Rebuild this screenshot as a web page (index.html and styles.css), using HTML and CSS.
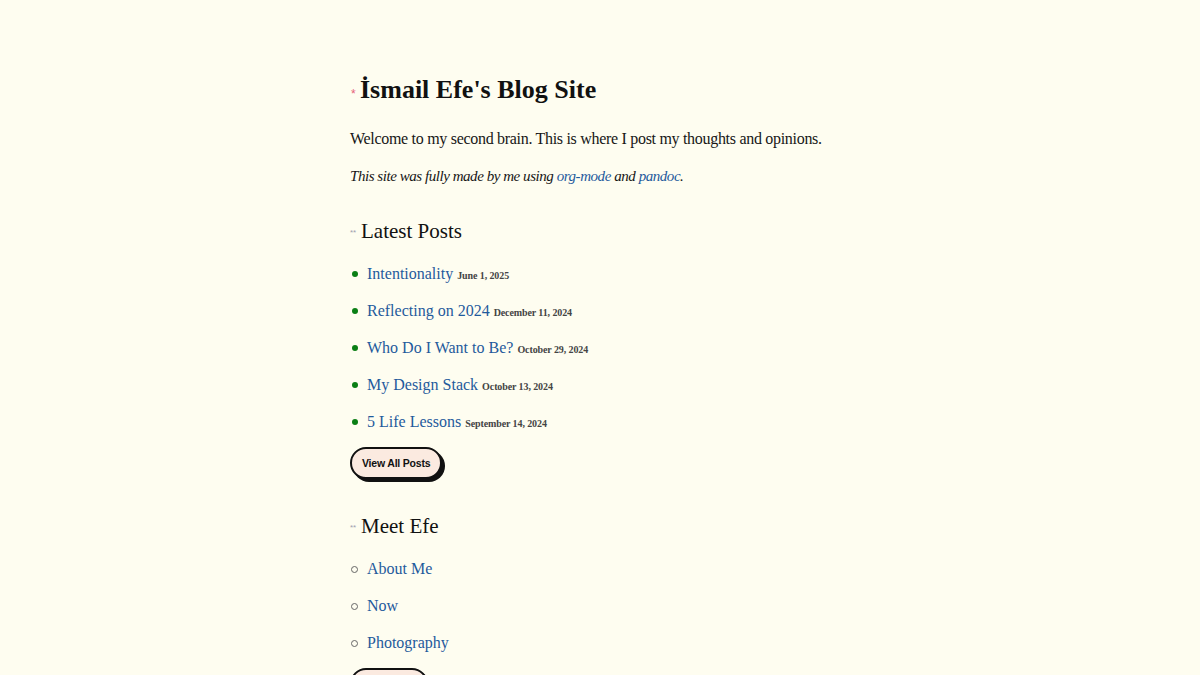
FILE: index.html
```html
<!DOCTYPE html>
<html lang="en">
<head>
<meta charset="utf-8">
<title>İsmail Efe's Blog Site</title>
<link rel="stylesheet" href="styles.css">
</head>
<body>
<main class="page">
  <h1 class="title"><span class="mark mark-1">*</span>İsmail Efe's Blog Site</h1>
  <p class="intro">Welcome to my second brain. This is where I post my thoughts and opinions.</p>
  <p class="intro note"><em>This site was fully made by me using <a href="#">org-mode</a> and <a href="#">pandoc</a>.</em></p>

  <h2 class="section"><span class="mark mark-2">**</span>Latest Posts</h2>
  <ul class="list posts">
    <li class="item"><a href="#">Intentionality</a> <span class="date">June 1, 2025</span></li>
    <li class="item"><a href="#">Reflecting on 2024</a> <span class="date">December 11, 2024</span></li>
    <li class="item"><a href="#">Who Do I Want to Be?</a> <span class="date">October 29, 2024</span></li>
    <li class="item"><a href="#">My Design Stack</a> <span class="date">October 13, 2024</span></li>
    <li class="item"><a href="#">5 Life Lessons</a> <span class="date">September 14, 2024</span></li>
  </ul>
  <a class="btn" href="#">View All Posts</a>

  <h2 class="section"><span class="mark mark-2">**</span>Meet Efe</h2>
  <ul class="list circles">
    <li class="item"><a href="#">About Me</a></li>
    <li class="item"><a href="#">Now</a></li>
    <li class="item"><a href="#">Photography</a></li>
  </ul>
  <a class="btn btn-small" href="#">More Me</a>
</main>
</body>
</html>
```

FILE: styles.css
```css
html, body {
  margin: 0;
  padding: 0;
  background: #fefdf0;
}
body {
  font-family: "Liberation Serif", "Times New Roman", serif;
  color: #161616;
  font-size: 16px;
}
.page {
  width: 500px;
  margin: 0 auto;
  padding-top: 70px;
  display: flex;
  flex-direction: column;
  align-items: flex-start;
}
.title {
  margin: 0 0 17px;
  font-size: 26px;
  line-height: 40px;
  font-weight: bold;
  color: #111;
  display: flex;
  align-items: center;
}
.mark {
  font-family: "Liberation Sans", sans-serif;
  font-weight: normal;
  line-height: 1;
  flex: none;
}
.mark-1 {
  color: #e5607a;
  font-size: 12px;
  width: 10px;
  position: relative;
  top: 4px;
  left: 1px;
}
.mark-2 {
  color: #a0a0ae;
  font-size: 8px;
  width: 11px;
  position: relative;
  top: 2px;
}
.intro {
  margin: 0 0 13px;
  line-height: 24px;
  letter-spacing: -0.3px;
}
.note {
  margin-bottom: 28px;
  font-size: 15px;
  letter-spacing: -0.45px;
}
a {
  color: #1f5a9c;
  text-decoration: none;
}
.section {
  margin: 0 0 16px;
  font-size: 21px;
  line-height: 30px;
  font-weight: normal;
  color: #111;
  display: flex;
  align-items: center;
}
.list {
  list-style: none;
  margin: 0 0 13px;
  padding: 0;
  display: flex;
  flex-direction: column;
  gap: 13px;
}
.item {
  height: 24px;
  line-height: 24px;
  display: flex;
  align-items: baseline;
  gap: 4px;
}
.item::before {
  content: "";
  width: 6px;
  height: 6px;
  border-radius: 50%;
  margin: 0 5px 0 2px;
  align-self: center;
  flex: none;
}
.posts .item::before {
  background: #0a7f14;
}
.circles .item::before {
  width: 5px;
  height: 5px;
  border: 1px solid #666;
  box-sizing: content-box;
  margin-left: 1px;
}
.date {
  font-size: 10px;
  color: #444;
  font-weight: bold;
  letter-spacing: -0.1px;
}
.btn {
  display: inline-block;
  box-sizing: border-box;
  height: 32px;
  line-height: 28px;
  padding: 0 10px;
  border: 2px solid #111;
  border-radius: 16px;
  background: #fbeae0;
  box-shadow: 3px 3px 0 #111;
  font-family: "Liberation Sans", Arial, sans-serif;
  font-weight: bold;
  font-size: 10.5px;
  letter-spacing: -0.2px;
  color: #111;
  margin-bottom: 32px;
}
.btn-small {
  width: 78px;
  padding: 0;
  text-align: center;
}
```
